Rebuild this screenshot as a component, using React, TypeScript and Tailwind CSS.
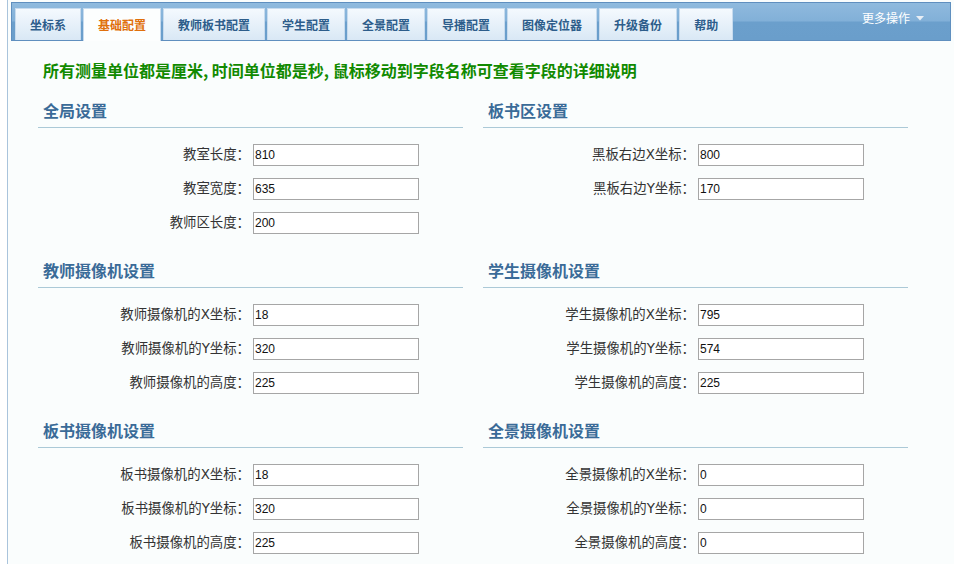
import React from "react";

const tabs = ["坐标系", "基础配置", "教师板书配置", "学生配置", "全景配置", "导播配置", "图像定位器", "升级备份", "帮助"];

type Field = { label: string; value: string };
type Section = { title: string; fields: Field[] };

const left: Section[] = [
  { title: "全局设置", fields: [ { label: "教室长度：", value: "810" }, { label: "教室宽度：", value: "635" }, { label: "教师区长度：", value: "200" } ] },
  { title: "教师摄像机设置", fields: [ { label: "教师摄像机的X坐标：", value: "18" }, { label: "教师摄像机的Y坐标：", value: "320" }, { label: "教师摄像机的高度：", value: "225" } ] },
  { title: "板书摄像机设置", fields: [ { label: "板书摄像机的X坐标：", value: "18" }, { label: "板书摄像机的Y坐标：", value: "320" }, { label: "板书摄像机的高度：", value: "225" } ] },
];

const right: Section[] = [
  { title: "板书区设置", fields: [ { label: "黑板右边X坐标：", value: "800" }, { label: "黑板右边Y坐标：", value: "170" } ] },
  { title: "学生摄像机设置", fields: [ { label: "学生摄像机的X坐标：", value: "795" }, { label: "学生摄像机的Y坐标：", value: "574" }, { label: "学生摄像机的高度：", value: "225" } ] },
  { title: "全景摄像机设置", fields: [ { label: "全景摄像机的X坐标：", value: "0" }, { label: "全景摄像机的Y坐标：", value: "0" }, { label: "全景摄像机的高度：", value: "0" } ] },
];

function SectionBlock({ s }: { s: Section }) {
  return (
    <div className="h-[160px]">
      <div className="border-b border-[#abc9d7] pb-[6px] pl-[5px] text-[16px] leading-[21px] font-bold text-[#3a6b98]">
        {s.title}
      </div>
      <div className="mt-[16px] flex flex-col gap-[12px]">
        {s.fields.map((f) => (
          <div key={f.label} className="flex items-center h-[22px]">
            <div className="w-[212px] text-right text-[13.4px] text-[#333] whitespace-nowrap font-['DejaVu_Sans','Noto_Sans_CJK_SC',sans-serif]">{f.label}</div>
            <div className="ml-[3px] w-[166px] h-[22px] border border-[#a6a6a6] bg-white flex items-center pl-[1px] text-[12px] text-[#111] font-['Liberation_Sans',sans-serif]">
              {f.value}
            </div>
          </div>
        ))}
      </div>
    </div>
  );
}

export default function App() {
  return (
    <div className="w-[954px] h-[564px] overflow-hidden bg-white font-['Noto_Sans_CJK_SC','Noto_Sans',sans-serif]">
      <div className="ml-[7px] h-full border-l border-[#a9c4dc] bg-[#fafdfd]">
        <div className="pt-[2px] pl-[3px]">
          <div className="w-[940px] h-[39px] border border-[#5f8fbf] flex items-end pl-[3px] gap-[2px] bg-[linear-gradient(to_bottom,#8fbade_0%,#82b0d8_48%,#6b9fcc_52%,#6a9ecb_100%)]">
            {tabs.map((t, i) =>
              i === 1 ? (
                <div key={t} className="h-[33px] mb-[-1px] px-[14px] flex items-center border-x border-t border-[#c7dbee] bg-[#fcfefe] text-[12px] font-bold text-[#e0700c] whitespace-nowrap">
                  {t}
                </div>
              ) : (
                <div key={t} className="h-[32px] px-[14px] flex items-center border-x border-t border-[#c7dbee] bg-[linear-gradient(to_bottom,#f4f9fe,#d9e8f5)] text-[12px] font-bold text-[#2d5d8b] whitespace-nowrap">
                  {t}
                </div>
              )
            )}
            <div className="ml-auto self-start mt-[6px] mr-[26px] flex items-center gap-[6px] text-[12px] text-white whitespace-nowrap">
              <span>更多操作</span>
              <svg width="8" height="5" viewBox="0 0 8 5"><path d="M0 0h8L4 4.5z" fill="#e8eef5" /></svg>
            </div>
          </div>
        </div>
        <div className="pl-[35px] mt-[19px] text-[16px] leading-[20px] font-bold text-[#118a00] whitespace-nowrap">
          所有测量单位都是厘米, 时间单位都是秒, 鼠标移动到字段名称可查看字段的详细说明
        </div>
        <div className="ml-[30px] mt-[20px] w-[870px] grid grid-cols-2 gap-x-[20px]">
          <div>
            {left.map((s) => (
              <SectionBlock key={s.title} s={s} />
            ))}
          </div>
          <div>
            {right.map((s) => (
              <SectionBlock key={s.title} s={s} />
            ))}
          </div>
        </div>
      </div>
    </div>
  );
}
